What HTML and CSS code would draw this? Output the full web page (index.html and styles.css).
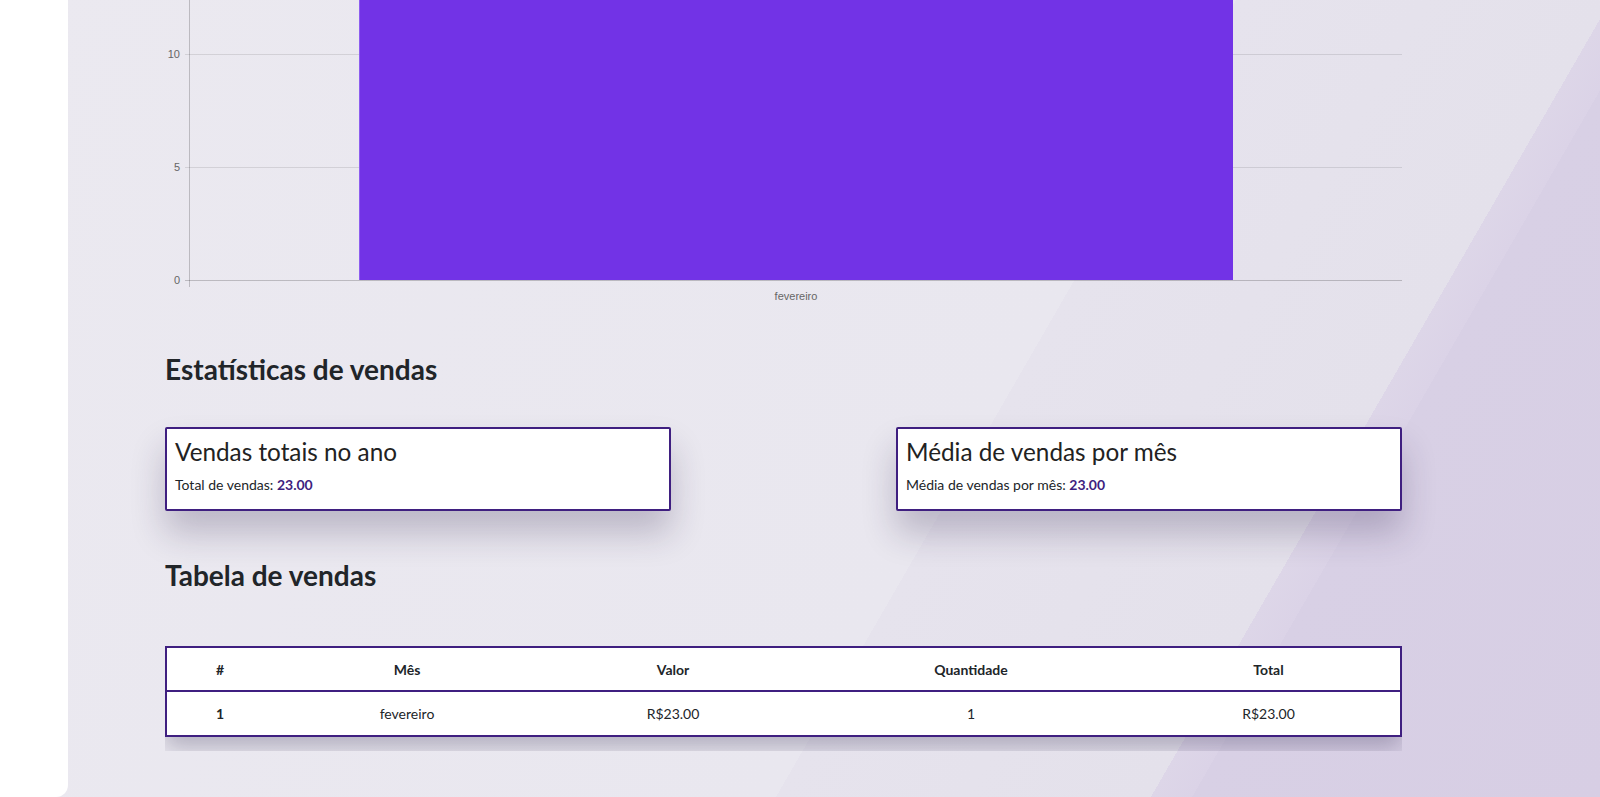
FILE: index.html
```html
<!DOCTYPE html>
<html lang="pt-BR">
<head>
<meta charset="utf-8">
<title>Vendas</title>
<link rel="stylesheet" href="styles.css">
</head>
<body>
<div class="app">
  <aside class="sidebar"></aside>
  <main class="main">
    <section class="chart">
      <svg class="chart-svg" width="1237" height="305" viewBox="0 0 1237 305">
        <g class="grid">
          <line x1="20" y1="54.5" x2="1237" y2="54.5"/>
          <line x1="20" y1="167.5" x2="1237" y2="167.5"/>
        </g>
        <rect class="bar" x="194" y="0" width="874" height="280"/>
        <rect class="bar-edge" x="194" y="0" width="1" height="280"/>
        <g class="axis">
          <line x1="20" y1="280.5" x2="1237" y2="280.5"/>
          <line x1="24.5" y1="0" x2="24.5" y2="287"/>
        </g>
        <g class="labels">
          <text x="15" y="58" text-anchor="end">10</text>
          <text x="15" y="171" text-anchor="end">5</text>
          <text x="15" y="284" text-anchor="end">0</text>
          <text x="631" y="300" text-anchor="middle">fevereiro</text>
        </g>
      </svg>
    </section>

    <h3 class="section-title">Estatísticas de vendas</h3>
    <div class="stats">
      <div class="stat-card">
        <h4 class="stat-title">Vendas totais no ano</h4>
        <p class="stat-text">Total de vendas: <strong class="stat-value">23.00</strong></p>
      </div>
      <div class="stat-card">
        <h4 class="stat-title">Média de vendas por mês</h4>
        <p class="stat-text">Média de vendas por mês: <strong class="stat-value">23.00</strong></p>
      </div>
    </div>

    <h3 class="section-title section-title--table">Tabela de vendas</h3>
    <div class="table-wrap">
      <table class="sales-table">
        <colgroup>
          <col class="c1"><col class="c2"><col class="c3"><col class="c4"><col class="c5">
        </colgroup>
        <thead>
          <tr><th>#</th><th>Mês</th><th>Valor</th><th>Quantidade</th><th>Total</th></tr>
        </thead>
        <tbody>
          <tr><th>1</th><td>fevereiro</td><td>R$23.00</td><td>1</td><td>R$23.00</td></tr>
        </tbody>
      </table>
    </div>
  </main>
</div>
</body>
</html>
```

FILE: styles.css
```css
* { box-sizing: border-box; }

html, body {
  margin: 0;
  padding: 0;
  height: 100%;
  overflow: hidden;
}

body {
  font-family: "Lato", "Liberation Sans", sans-serif;
  color: #212529;
}

.app {
  display: flex;
  height: 100vh;
  background: linear-gradient(120deg,
      #ebe9f0 0%,
      #e9e7ef 60%,
      #e6e3ed 60%,
      #e4e1eb 78.2%,
      #ddd6e8 78.2%,
      #dbd3e7 80.2%,
      #d8d0e5 80.2%,
      #d7cee4 100%);
}

.sidebar {
  flex: 0 0 68px;
  height: 100%;
  background: #fff;
  border-bottom-right-radius: 12px;
}

.main {
  flex: 1;
  padding-left: 97px;
}

.main > * {
  width: 1237px;
}

.chart {
  height: 305px;
}

.chart-svg {
  display: block;
  overflow: visible;
}

.grid line {
  stroke: rgba(0,0,0,0.1);
  stroke-width: 1;
}

.axis line {
  stroke: rgba(0,0,0,0.2);
  stroke-width: 1;
}

.bar { fill: #7233e6; }
.bar-edge { fill: #8d5df0; }

.labels text {
  font-family: "Liberation Sans", Arial, sans-serif;
  font-size: 11px;
  fill: #666;
}

.section-title {
  margin: 48px 0 40px;
  font-size: 28px;
  line-height: 1.2;
  font-weight: 700;
  color: #212529;
}

.section-title--table {
  margin: 48px 0 54px;
}

.stats {
  display: flex;
  justify-content: space-between;
}

.stat-card {
  width: 506px;
  background: #fff;
  border: 2px solid #3f1f80;
  border-radius: 2px;
  padding: 8px 8px 14px;
  box-shadow: 0 22px 34px rgba(40, 30, 70, 0.24);
}

.stat-title {
  margin: 0 0 8px;
  font-size: 24.3px;
  line-height: 1.2;
  font-weight: 400;
  color: #222;
}

.stat-text {
  margin: 0;
  font-size: 14px;
  line-height: 1.5;
}

.stat-value {
  color: #3f1f80;
  font-weight: 700;
}

.table-wrap {
  overflow: hidden;
  padding-bottom: 14px;
}

.sales-table {
  width: 100%;
  border-collapse: separate;
  border-spacing: 0;
  table-layout: fixed;
  background: #fff;
  border: 2px solid #3f1f80;
  box-shadow: 0 10px 22px rgba(30, 20, 60, 0.28);
  font-size: 14px;
  line-height: 1.5;
}

.c1 { width: 106px; }
.c2 { width: 268px; }
.c3 { width: 264px; }
.c4 { width: 332px; }

.sales-table th,
.sales-table td {
  text-align: center;
  padding: 10px 8px;
  height: 43px;
}

.sales-table thead th {
  font-weight: 700;
  height: 44px;
  border-bottom: 2px solid #3f1f80;
}

.sales-table tbody th {
  font-weight: 700;
}

.sales-table td {
  font-weight: 400;
}
```
